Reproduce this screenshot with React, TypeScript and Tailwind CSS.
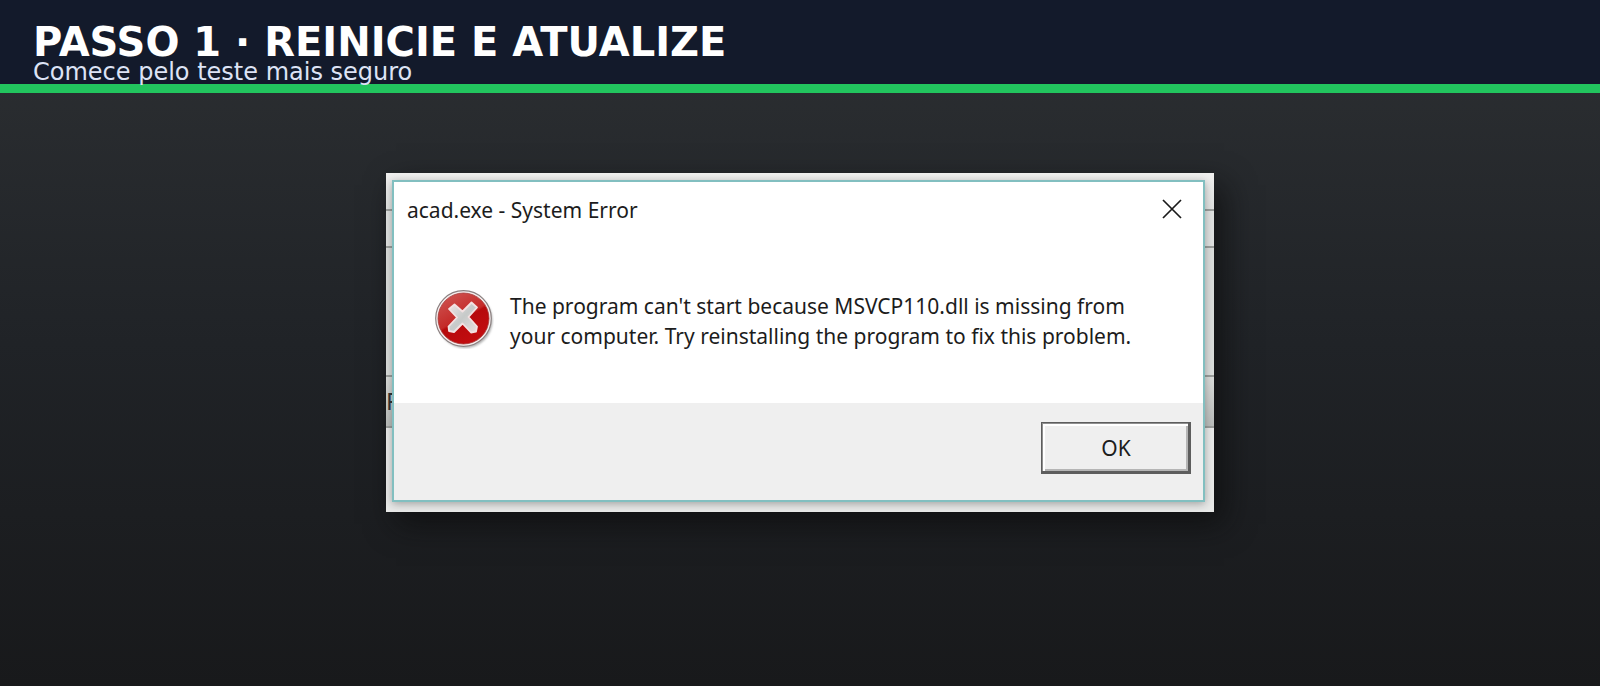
import { useState } from "react";

const backgroundRows = [
  "h-[38px] bg-linear-to-b from-[#f0f0ef] to-[#dfe1e0]",
  "h-[37px] bg-[#dfe1e0]",
  "h-[129px] bg-[#dadddb]",
  "h-[51px] bg-linear-to-b from-[#d9dbd9] to-[#b9bcba]",
];

function ErrorIcon() {
  return (
    <svg viewBox="0 0 60 60" className="size-15 shrink-0" aria-hidden="true">
      <defs>
        <linearGradient id="red" x1="0.15" y1="0" x2="0.7" y2="1">
          <stop offset="0" stopColor="#cf5552" />
          <stop offset="0.5" stopColor="#c42a28" />
          <stop offset="0.54" stopColor="#b60a0c" />
          <stop offset="1" stopColor="#c40d10" />
        </linearGradient>
        <linearGradient id="cross" x1="0" y1="0" x2="1" y2="1">
          <stop offset="0" stopColor="#f0e6e6" />
          <stop offset="0.5" stopColor="#c6cac9" />
          <stop offset="1" stopColor="#eadfdf" />
        </linearGradient>
        <filter id="soft" x="-20%" y="-20%" width="140%" height="140%">
          <feGaussianBlur stdDeviation="1.2" />
        </filter>
      </defs>
      <circle cx="31" cy="31.5" r="27.5" fill="#8d8d8d" opacity="0.7" filter="url(#soft)" />
      <circle cx="29.5" cy="29.5" r="27.8" fill="#f6eeee" stroke="#8b8080" strokeWidth="1.2" />
      <circle cx="29.5" cy="29.5" r="25.5" fill="url(#red)" stroke="#a63a38" strokeWidth="0.8" />
      <path
        d="M20.5 15.5 28.5 22.5 37.5 13.5 43 18.5 34.5 28 43 37.5 42 42.5 37 43.5 28.5 34.5 20 43 15 42 14.5 37.5 23 28.5 15 20Z"
        fill="url(#cross)"
        stroke="#f3e2e2"
        strokeWidth="1.8"
        strokeLinejoin="round"
      />
    </svg>
  );
}

function ErrorDialog({ onClose }: { onClose: () => void }) {
  return (
    <div
      role="dialog"
      aria-labelledby="dialog-title"
      aria-describedby="dialog-message"
      className="relative col-start-1 row-start-1 mt-[7px] mr-[9px] mb-[10px] ml-[6px] flex flex-col border-2 border-[#82bfc0] bg-white font-['Noto_Sans',sans-serif] text-[21px] text-[#1c1c1c] shadow-[0_2px_8px_rgba(0,0,0,0.3)]"
    >
      <div className="flex h-[54px] items-center justify-between pr-5 pl-[13px]">
        <h2 id="dialog-title" className="pt-1">
          acad.exe - System Error
        </h2>
        <button type="button" aria-label="Close" onClick={onClose} className="p-px">
          <svg viewBox="0 0 20 20" className="size-5" fill="none" stroke="#1a1a1a" strokeWidth="1.7">
            <path d="M1 1 19 19M19 1 1 19" />
          </svg>
        </button>
      </div>
      <div className="flex h-[167px] items-start gap-4 pt-[53px] pr-8 pl-10">
        <ErrorIcon />
        <p id="dialog-message" className="pt-0.5 leading-[30px]">
          The program can't start because MSVCP110.dll is missing from
          <br />
          your computer. Try reinstalling the program to fix this problem.
        </p>
      </div>
      <div className="flex h-[97px] items-start justify-end bg-[#efefef] pt-[19px] pr-3">
        <button
          type="button"
          onClick={onClose}
          className="h-[52px] w-[150px] border-t border-r-[3px] border-b-[3px] border-l border-[#5d5d5d] bg-[#efefef] pt-1 pl-0.5 shadow-[inset_1px_1px_0_#8f8f8f,inset_3px_3px_0_#fff,inset_-2px_-2px_0_#b5b5b5]"
        >
          OK
        </button>
      </div>
    </div>
  );
}

export default function App() {
  const [open, setOpen] = useState(true);

  return (
    <div className="flex min-h-screen flex-col bg-linear-to-b from-[#2d3033] via-[#202327] to-[#18191b]">
      <header className="border-b-[9px] border-[#22c55e] bg-[#131a2b] px-[33px] pt-6 font-['DejaVu_Sans',sans-serif]">
        <h1 className="text-[40px] leading-9 font-bold text-white">
          PASSO 1 · REINICIE E ATUALIZE
        </h1>
        <p className="text-2xl leading-6 text-[#dde3f5]">Comece pelo teste mais seguro</p>
      </header>
      <main className="flex flex-1 items-start justify-center pt-20">
        {open && (
          <div className="grid w-full max-w-[828px] shadow-[10px_12px_28px_rgba(10,10,10,0.65)]">
            <div className="col-start-1 row-start-1 flex flex-col overflow-hidden bg-[#e8e9e8]">
              {backgroundRows.map((row, i) => (
                <div key={i} className={`border-b-2 border-[#9b9e9c] ${row}`}>
                  {i === 3 && (
                    <span className="font-['Noto_Sans',sans-serif] text-2xl leading-[48px] text-[#333]">
                      F
                    </span>
                  )}
                </div>
              ))}
            </div>
            <ErrorDialog onClose={() => setOpen(false)} />
          </div>
        )}
      </main>
    </div>
  );
}
